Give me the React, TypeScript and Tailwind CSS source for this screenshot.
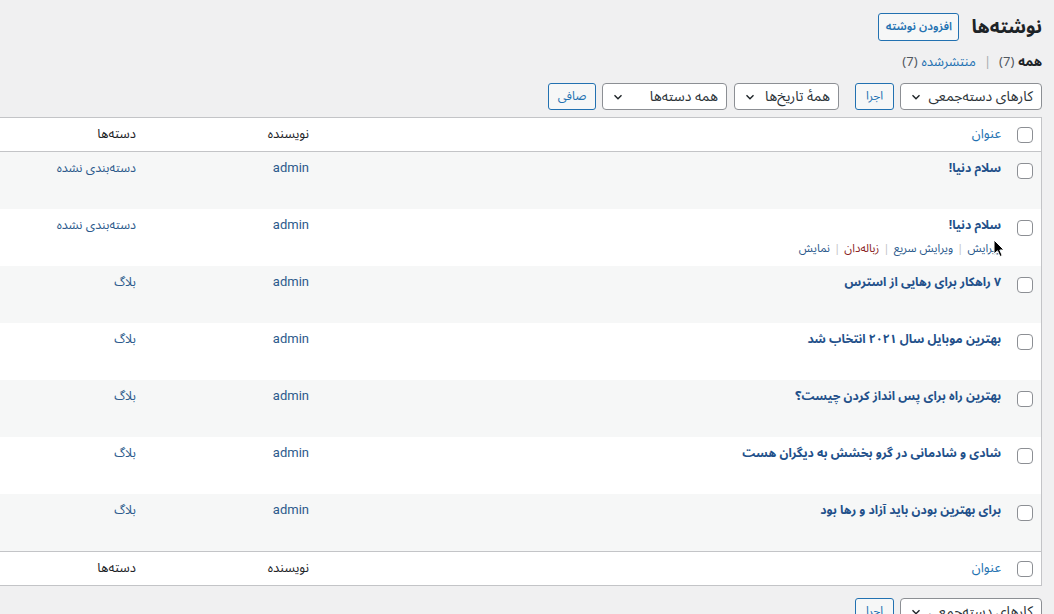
import React from "react";

const FONT = "font-['Noto_Sans_Arabic','DejaVu_Sans',sans-serif]";

function Chevron() {
  return (
    <svg width="10" height="10" viewBox="0 0 10 10" className="shrink-0">
      <path d="M1.5 3.2 L5 6.7 L8.5 3.2" fill="none" stroke="#1d2327" strokeWidth="1.4" />
    </svg>
  );
}

function Select({ label, w }: { label: string; w: string }) {
  return (
    <div
      className={`h-[27px] ${w} flex items-center justify-between pr-[8px] pl-[10px] bg-white border border-[#8c8f94] rounded-[4px] text-[14px] text-[#2c3338]`}
    >
      <span className="whitespace-nowrap">{label}</span>
      <Chevron />
    </div>
  );
}

function Btn({ label, w }: { label: string; w: string }) {
  return (
    <div
      className={`h-[27px] ${w} flex items-center justify-center bg-[#f6f7f7] border border-[#2271b1] rounded-[3px] text-[12px] text-[#2271b1] whitespace-nowrap`}
    >
      {label}
    </div>
  );
}

function Check() {
  return <div className="w-[16px] h-[16px] rounded-[4px] border border-[#8c8f94] bg-white shrink-0" />;
}

const posts = [
  { t: "سلام دنیا!", c: "دسته‌بندی نشده" },
  { t: "سلام دنیا!", c: "دسته‌بندی نشده", actions: true },
  { t: "۷ راهکار برای رهایی از استرس", c: "بلاگ" },
  { t: "بهترین موبایل سال ۲۰۲۱ انتخاب شد", c: "بلاگ" },
  { t: "بهترین راه برای پس انداز کردن چیست؟", c: "بلاگ" },
  { t: "شادی و شادمانی در گرو بخشش به دیگران هست", c: "بلاگ" },
  { t: "برای بهترین بودن باید آزاد و رها بود", c: "بلاگ" },
];

function HeaderRow({ top }: { top?: boolean }) {
  return (
    <div
      className={`flex h-[34px] items-center bg-white ${top ? "border-b" : "border-t"} border-[#c3c4c7] text-[13px]`}
    >
      <div className="w-[40px] flex justify-start pr-[8px] shrink-0">
        <Check />
      </div>
      <div className="flex-1 text-[#2271b1]">عنوان</div>
      <div className="w-[173px] pr-[10px] text-[#1d2327]">نویسنده</div>
      <div className="w-[146px] pr-[10px] text-[#1d2327]">دسته‌ها</div>
    </div>
  );
}

export default function App() {
  return (
    <div dir="rtl" className={`${FONT} w-[1054px] h-[614px] overflow-hidden bg-[#f0f0f1] text-[#1d2327]`}>
      <div className="pr-[12px] relative">
        {/* heading */}
        <div className="flex items-center pt-[13px] h-[41px]">
          <h1 className="text-[19px] font-bold leading-[28px] text-[#1d2327]">نوشته‌ها</h1>
          <div className="mr-[12px] h-[28px] w-[81px] flex items-center justify-center border border-[#2271b1] rounded-[3px] bg-[#f6f7f7] text-[11.5px] font-semibold text-[#2271b1]">
            افزودن نوشته
          </div>
        </div>
        {/* subsubsub */}
        <div className="mt-[13px] h-[18px] flex items-center text-[13px] text-[#50575e] gap-[4px]">
          <span className="font-bold text-[#1d2327]">همه</span>
          <span>(7)</span>
          <span className="mx-[4px] text-[#a7aaad]">|</span>
          <span className="text-[#2271b1]">منتشرشده</span>
          <span>(7)</span>
        </div>
        {/* tablenav */}
        <div className="mt-[11px] flex items-center">
          <Select label="کارهای دسته‌جمعی" w="w-[142px]" />
          <div className="mr-[6px]">
            <Btn label="اجرا" w="w-[39px]" />
          </div>
          <div className="mr-[16px]">
            <Select label="همهٔ تاریخ‌ها" w="w-[105px]" />
          </div>
          <div className="mr-[7px]">
            <Select label="همه دسته‌ها" w="w-[125px]" />
          </div>
          <div className="mr-[6px]">
            <Btn label="صافی" w="w-[48px]" />
          </div>
        </div>
        {/* table */}
        <div className="mt-[7px] border-y border-r border-[#c3c4c7] bg-white">
          <HeaderRow top />
          {posts.map((p, i) => (
            <div key={i} className={`flex h-[57px] items-start pt-[7px] text-[13px] ${i % 2 === 0 ? "bg-[#f6f7f7]" : "bg-white"}`}>
              <div className="w-[40px] flex justify-start pr-[8px] pt-[4px] shrink-0">
                <Check />
              </div>
              <div className="flex-1">
                <div className="font-bold text-[12.2px] leading-[18px] text-[#22508a]">{p.t}</div>
                {p.actions && (
                  <div className="mt-[5px] flex items-center gap-[4px] text-[11.5px] leading-[18px]">
                    <span className="text-[#2c5a8c]">ویرایش</span>
                    <span className="text-[#c3c4c7]">|</span>
                    <span className="text-[#2c5a8c]">ویرایش سریع</span>
                    <span className="text-[#c3c4c7]">|</span>
                    <span className="text-[#8a2424]">زباله‌دان</span>
                    <span className="text-[#c3c4c7]">|</span>
                    <span className="text-[#2c5a8c]">نمایش</span>
                  </div>
                )}
              </div>
              <div className="w-[173px] pr-[10px] text-[#2c5a8c] leading-[18px] font-['Roboto',sans-serif] text-[13px]">admin</div>
              <div className="w-[146px] pr-[10px] text-[#2c5a8c] leading-[18px] text-[12.5px]">{p.c}</div>
            </div>
          ))}
          <HeaderRow />
        </div>
        {/* bottom tablenav */}
        <div className="mt-[12px] flex items-center">
          <Select label="کارهای دسته‌جمعی" w="w-[142px]" />
          <div className="mr-[6px]">
            <Btn label="اجرا" w="w-[39px]" />
          </div>
        </div>
        {/* cursor */}
        <svg className="absolute left-[993px] top-[239px]" width="12" height="19" viewBox="0 0 12 19">
          <path d="M1 1 L1 15 L4.5 11.8 L7 17.5 L9.2 16.5 L6.8 11 L11 11 Z" fill="#000" stroke="#fff" strokeWidth="1" />
        </svg>
      </div>
    </div>
  );
}
